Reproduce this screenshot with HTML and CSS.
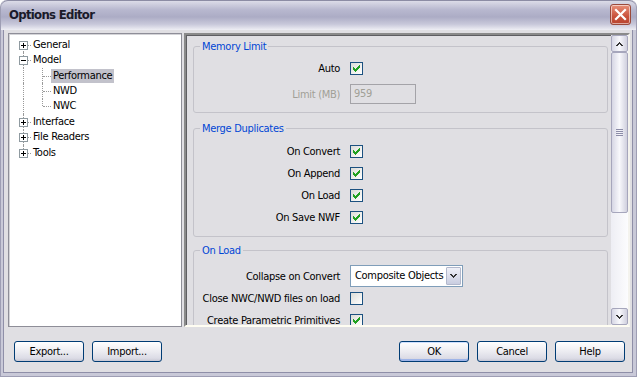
FILE: index.html
```html
<!DOCTYPE html>
<html>
<head>
<meta charset="utf-8">
<link rel="stylesheet" href="styles.css">
</head>
<body>
<div class="window">
  <div class="titlebar">
    <span class="title">Options Editor</span>
    <span class="close"><svg width="19" height="19" viewBox="0 0 19 19"><path d="M5 5L14 14M14 5L5 14" stroke="#fff" stroke-width="2.2" stroke-linecap="square"/></svg></span>
  </div>
  <div class="client">
    <div class="main">
      <div class="tree">
        <div class="node"><span class="lines root v-bottom"><svg class="exp" width="9" height="9" viewBox="0 0 9 9"><rect x="0.5" y="0.5" width="8" height="8" fill="#fff" stroke="#8f9aa0"/><path d="M2 4h5v1h-5z M4 2h1v5h-1z" fill="#000"/></svg></span><span class="label">General</span></div>
        <div class="node"><span class="lines root v-full"><svg class="exp" width="9" height="9" viewBox="0 0 9 9"><rect x="0.5" y="0.5" width="8" height="8" fill="#fff" stroke="#8f9aa0"/><path d="M2 4h5v1h-5z" fill="#000"/></svg></span><span class="label">Model</span></div>
        <div class="node"><span class="lines pass v-full"></span><span class="lines child v-full"></span><span class="label sel">Performance</span></div>
        <div class="node"><span class="lines pass v-full"></span><span class="lines child v-full"></span><span class="label">NWD</span></div>
        <div class="node"><span class="lines pass v-full"></span><span class="lines child v-top"></span><span class="label">NWC</span></div>
        <div class="node"><span class="lines root v-full"><svg class="exp" width="9" height="9" viewBox="0 0 9 9"><rect x="0.5" y="0.5" width="8" height="8" fill="#fff" stroke="#8f9aa0"/><path d="M2 4h5v1h-5z M4 2h1v5h-1z" fill="#000"/></svg></span><span class="label">Interface</span></div>
        <div class="node"><span class="lines root v-full"><svg class="exp" width="9" height="9" viewBox="0 0 9 9"><rect x="0.5" y="0.5" width="8" height="8" fill="#fff" stroke="#8f9aa0"/><path d="M2 4h5v1h-5z M4 2h1v5h-1z" fill="#000"/></svg></span><span class="label">File Readers</span></div>
        <div class="node"><span class="lines root v-top"><svg class="exp" width="9" height="9" viewBox="0 0 9 9"><rect x="0.5" y="0.5" width="8" height="8" fill="#fff" stroke="#8f9aa0"/><path d="M2 4h5v1h-5z M4 2h1v5h-1z" fill="#000"/></svg></span><span class="label">Tools</span></div>
      </div>
      <div class="panel">
        <div class="content">
          <div class="group g1">
            <span class="gtitle">Memory Limit</span>
            <div class="row"><span class="lbl">Auto</span><span class="check on"><svg width="7" height="7" viewBox="0 0 7 7"><path d="M6 0h1v3h-1z M5 1h1v3h-1z M4 2h1v3h-1z M3 3h1v3h-1z M2 4h1v3h-1z M1 3h1v3h-1z M0 2h1v3h-1z" fill="#21a121"/></svg></span></div>
            <div class="row"><span class="lbl dis">Limit (MB)</span><span class="field">959</span></div>
          </div>
          <div class="group g2">
            <span class="gtitle">Merge Duplicates</span>
            <div class="row"><span class="lbl">On Convert</span><span class="check on"><svg width="7" height="7" viewBox="0 0 7 7"><path d="M6 0h1v3h-1z M5 1h1v3h-1z M4 2h1v3h-1z M3 3h1v3h-1z M2 4h1v3h-1z M1 3h1v3h-1z M0 2h1v3h-1z" fill="#21a121"/></svg></span></div>
            <div class="row"><span class="lbl">On Append</span><span class="check on"><svg width="7" height="7" viewBox="0 0 7 7"><path d="M6 0h1v3h-1z M5 1h1v3h-1z M4 2h1v3h-1z M3 3h1v3h-1z M2 4h1v3h-1z M1 3h1v3h-1z M0 2h1v3h-1z" fill="#21a121"/></svg></span></div>
            <div class="row"><span class="lbl">On Load</span><span class="check on"><svg width="7" height="7" viewBox="0 0 7 7"><path d="M6 0h1v3h-1z M5 1h1v3h-1z M4 2h1v3h-1z M3 3h1v3h-1z M2 4h1v3h-1z M1 3h1v3h-1z M0 2h1v3h-1z" fill="#21a121"/></svg></span></div>
            <div class="row"><span class="lbl">On Save NWF</span><span class="check on"><svg width="7" height="7" viewBox="0 0 7 7"><path d="M6 0h1v3h-1z M5 1h1v3h-1z M4 2h1v3h-1z M3 3h1v3h-1z M2 4h1v3h-1z M1 3h1v3h-1z M0 2h1v3h-1z" fill="#21a121"/></svg></span></div>
          </div>
          <div class="group g3">
            <span class="gtitle">On Load</span>
            <div class="row"><span class="lbl">Collapse on Convert</span><span class="select"><span class="seltext">Composite Objects</span><span class="selbtn"><svg width="7" height="4" viewBox="0 0 7 4"><path d="M0 0h2v1h-2z M5 0h2v1h-2z M1 1h2v1h-2z M4 1h2v1h-2z M2 2h3v1h-3z M3 3h1v1h-1z" fill="#333"/></svg></span></span></div>
            <div class="row"><span class="lbl">Close NWC/NWD files on load</span><span class="check"></span></div>
            <div class="row"><span class="lbl">Create Parametric Primitives</span><span class="check on"><svg width="7" height="7" viewBox="0 0 7 7"><path d="M6 0h1v3h-1z M5 1h1v3h-1z M4 2h1v3h-1z M3 3h1v3h-1z M2 4h1v3h-1z M1 3h1v3h-1z M0 2h1v3h-1z" fill="#21a121"/></svg></span></div>
          </div>
        </div>
        <div class="scrollbar">
          <span class="sbbtn"><svg width="7" height="4" viewBox="0 0 7 4"><path d="M3 0h1v1h-1z M2 1h3v1h-3z M1 2h2v1h-2z M4 2h2v1h-2z M0 3h2v1h-2z M5 3h2v1h-2z" fill="#333"/></svg></span>
          <span class="thumb"><svg width="7" height="7" viewBox="0 0 7 7"><path d="M0 0h7v1h-7z M0 2h7v1h-7z M0 4h7v1h-7z M0 6h7v1h-7z" fill="#8c8ca8"/></svg></span>
          <span class="track"></span>
          <span class="sbbtn"><svg width="7" height="4" viewBox="0 0 7 4"><path d="M0 0h2v1h-2z M5 0h2v1h-2z M1 1h2v1h-2z M4 1h2v1h-2z M2 2h3v1h-3z M3 3h1v1h-1z" fill="#333"/></svg></span>
        </div>
      </div>
    </div>
    <div class="actions">
      <button class="btn">Export...</button>
      <button class="btn">Import...</button>
      <span class="spacer"></span>
      <button class="btn default">OK</button>
      <button class="btn">Cancel</button>
      <button class="btn">Help</button>
    </div>
  </div>
</div>
</body>
</html>
```
FILE: styles.css
```css
* { box-sizing: border-box; }
html, body { margin: 0; padding: 0; background: #fff; }
body {
  font-family: "DejaVu Sans Condensed", "DejaVu Sans", sans-serif;
  font-stretch: condensed;
  font-size: 11px;
  letter-spacing: -0.3px;
  color: #000;
}
.window {
  width: 637px;
  height: 377px;
  display: flex;
  flex-direction: column;
  background: #c9c9d8;
  border: 1px solid #9e9eb4;
  border-top: none;
  border-radius: 7px 7px 0 0;
  padding: 0 3px 3px 2px;
  overflow: hidden;
}
.titlebar {
  height: 30px;
  margin: 0 -3px 0 -2px;
  display: flex;
  align-items: center;
  padding: 0 5px 2px 8px;
  border-top: 1px solid #8c8ca4;
  border-radius: 7px 7px 0 0;
  background: linear-gradient(#dcdce8 0%, #b8b8cf 30%, #acacc5 55%, #c8c8da 80%, #eeeef4 100%);
}
.title {
  flex: 1;
  font-weight: bold;
  font-size: 13px;
  letter-spacing: -0.7px;
  color: #1a1a2a;
}
.close {
  width: 21px;
  height: 21px;
  border: 1px solid #9a4a3c;
  border-radius: 3px;
  background: linear-gradient(#e8907a, #c9523c 60%, #b84530);
  box-shadow: inset 0 0 0 1px rgba(255,255,255,0.55);
  display: flex;
  align-items: center;
  justify-content: center;
}
.client {
  flex: 1;
  background: #e0dfe3;
  border: 1px solid #8f8fa8;
  border-top: none;
  display: flex;
  flex-direction: column;
}
.main {
  display: flex;
  gap: 2px;
  height: 294px;
  margin: 3px 2px 0 4px;
}
.tree {
  width: 174px;
  background: #fff;
  border: 1px solid #8e8e98;
  box-shadow: inset 1px 1px 0 #d4d4d8;
  padding: 3px 0 0 5px;
}
.node {
  height: 15.43px;
  display: flex;
  align-items: center;
}
.lines {
  position: relative;
  height: 100%;
  flex: none;
}
.lines.root { width: 17px; }
.lines.pass { width: 19px; }
.lines.child { width: 18px; }
.lines::before {
  content: "";
  position: absolute;
  left: 9px;
  width: 0;
  border-left: 1px dotted #9a9a9a;
}
.v-full::before { top: 0; bottom: 0; }
.v-bottom::before { top: 50%; bottom: 0; }
.v-top::before { top: 0; height: 50%; }
.lines.root::after, .lines.child::after {
  content: "";
  position: absolute;
  top: 50%;
  height: 0;
  border-top: 1px dotted #9a9a9a;
}
.lines.root::after { left: 14px; width: 3px; }
.lines.child::after { left: 10px; width: 8px; }
.exp {
  position: absolute;
  left: 5px;
  top: calc(50% - 4px);
  z-index: 1;
}
.label {
  line-height: 14px;
  padding: 0 2px;
  white-space: nowrap;
}
.label.sel { background: #c2c2cb; }
.panel {
  flex: 1;
  display: flex;
  border-style: solid;
  border-width: 2px;
  border-color: #8a8a8a #f4f3ee #fffdf2 #8a8a8a;
  box-shadow: inset 1px 1px 0 #5e5e62;
  overflow: hidden;
}
.content {
  flex: 1;
  padding: 11px 3px 0 7px;
  overflow: hidden;
}
.group {
  position: relative;
  border: 1px solid #c4c3ca;
  border-radius: 3px;
  display: flex;
  flex-direction: column;
}
.g1 { padding: 10px 0 7px; gap: 4px; }
.g2 { margin-top: 15px; padding: 11px 0 8px; }
.g3 { margin-top: 13px; padding: 14px 0 0; }
.gtitle {
  position: absolute;
  top: -7px;
  left: 6px;
  padding: 0 2px;
  line-height: 13px;
  background: #e0dfe3;
  color: #0046d5;
}
.row {
  height: 22px;
  display: grid;
  grid-template-columns: 146px auto;
  column-gap: 10px;
  align-items: center;
  justify-items: start;
}
.lbl {
  justify-self: end;
  white-space: nowrap;
  padding-top: 1px;
}
.lbl.dis { color: #a19f97; }
.check {
  width: 13px;
  height: 13px;
  border: 1px solid #1c5180;
  background: linear-gradient(135deg, #dcdcd7, #fff);
  display: flex;
  align-items: center;
  justify-content: center;
}
.field {
  width: 66px;
  height: 20px;
  border: 1px solid #a4a3a8;
  color: #a19f97;
  padding-left: 3px;
  line-height: 18px;
}
.select {
  width: 113px;
  height: 22px;
  border: 1px solid #7f9db9;
  background: #fff;
  display: flex;
  align-items: stretch;
  padding: 1px;
}
.seltext {
  flex: 1;
  padding-left: 3px;
  line-height: 18px;
  white-space: nowrap;
}
.selbtn {
  width: 15px;
  border: 1px solid #b2b8cc;
  border-radius: 1px;
  background: linear-gradient(#f0f1f8, #c9cde0);
  display: flex;
  align-items: center;
  justify-content: center;
}
.scrollbar {
  width: 17px;
  display: flex;
  flex-direction: column;
  background: linear-gradient(90deg, #eeeef4, #fcfcfe);
}
.sbbtn {
  height: 17px;
  flex: none;
  border: 1px solid #a6a6bc;
  border-radius: 2px;
  background: linear-gradient(90deg, #d6d6e4, #f8f8fc 50%, #d0d0de);
  display: flex;
  align-items: center;
  justify-content: center;
}
.thumb {
  height: 161px;
  flex: none;
  border: 1px solid #a6a6bc;
  border-radius: 2px;
  background: linear-gradient(90deg, #d6d6e4, #f8f8fc 50%, #d0d0de);
  display: flex;
  align-items: center;
  justify-content: center;
}
.track { flex: 1; }
.actions {
  display: flex;
  gap: 8px;
  margin: 14px 7px 0 10px;
}
.spacer { flex: 1; }
.btn {
  width: 70px;
  height: 21px;
  padding: 0;
  font: inherit;
  letter-spacing: inherit;
  color: #000;
  border: 1px solid #003c74;
  border-radius: 3px;
  background: linear-gradient(#ffffff, #f0f0f4 40%, #dcdce6 85%, #c8c8d4);
}
.btn.default {
  box-shadow: inset 0 -2px 0 #9eb4e8, inset 0 1px 0 #cfe0ff;
}
```
